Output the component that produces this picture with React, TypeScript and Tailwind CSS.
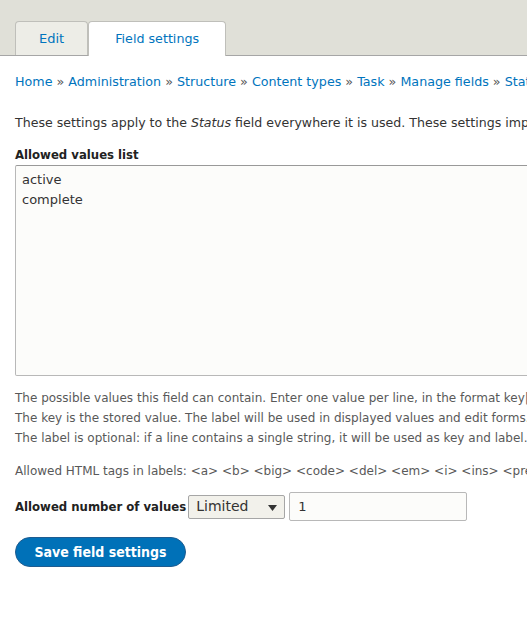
import * as React from 'react';

const font = { fontFamily: '"DejaVu Sans", "Liberation Sans", sans-serif' };
const boldFont = { fontFamily: '"DejaVu Sans Condensed", "DejaVu Sans", sans-serif' };

function Tabs() {
  return (
    <div className="bg-[#e0e0d8] border-b border-[#a6a6a6] px-[15px] pt-[21px] flex">
      <a className="block h-[34px] leading-[34px] px-[23px] bg-[#ededE7] border border-b-0 border-[#bfbfba] rounded-t-[4px] text-[13px] text-[#0074bd] -mb-px">
        Edit
      </a>
      <a className="block h-[35px] leading-[34px] px-[26px] bg-white border border-b-0 border-[#bfbfba] rounded-t-[4px] text-[12.7px] text-[#0074bd] -mb-px">
        Field settings
      </a>
    </div>
  );
}

const crumbs = ['Home', 'Administration', 'Structure', 'Content types', 'Task', 'Manage fields', 'Status'];

export default function App() {
  const [limit, setLimit] = React.useState('1');
  return (
    <div className="w-[527px] h-[626px] overflow-hidden bg-white text-[#333]" style={font}>
      <div className="w-[900px]">
        <Tabs />
        <div className="px-[15px]">
          <div className="mt-[16px] text-[12.7px] leading-[20px] whitespace-nowrap">
            {crumbs.map((c, i) => (
              <span key={c}>
                {i > 0 && <span className="text-[#555]"> » </span>}
                <a className="text-[#0074bd]">{c}</a>
              </span>
            ))}
          </div>
          <p className="mt-[21px] text-[12.6px] leading-[20px] whitespace-nowrap text-[#333]">
            These settings apply to the <em>Status</em> field everywhere it is used. These settings impact the way that data is stored in the database and cannot be changed once data has been created.
          </p>
          <div className="mt-[12px]">
            <label className="block text-[13px] font-bold leading-[20px] text-[#222]" style={boldFont}>Allowed values list</label>
            <textarea
              className="block w-[700px] h-[211px] bg-[#fcfcfa] border border-[#b8b8b8] border-t-[#999] rounded-[2px] px-[6px] py-[4px] text-[13px] leading-[20px] text-[#333] resize-none outline-none"
              defaultValue={'active\ncomplete'}
              style={font}
            />
            <div className="mt-[12px] text-[12px] leading-[20px] text-[#595959] whitespace-nowrap">
              <div>The possible values this field can contain. Enter one value per line, in the format key|label.</div>
              <div>The key is the stored value. The label will be used in displayed values and edit forms.</div>
              <div>The label is optional: if a line contains a single string, it will be used as key and label.</div>
              <div className="mt-[13px]">Allowed HTML tags in labels: &lt;a&gt; &lt;b&gt; &lt;big&gt; &lt;code&gt; &lt;del&gt; &lt;em&gt; &lt;i&gt; &lt;ins&gt; &lt;pre&gt; &lt;q&gt; &lt;small&gt; &lt;span&gt; &lt;strong&gt; &lt;sub&gt; &lt;sup&gt; &lt;tt&gt; &lt;ol&gt; &lt;ul&gt; &lt;li&gt; &lt;p&gt; &lt;br&gt; &lt;img&gt;</div>
            </div>
          </div>
          <div className="mt-[11px] flex items-center">
            <label className="text-[13px] font-bold text-[#222] mr-[2px]" style={boldFont}>Allowed number of values</label>
            <div className="relative w-[97px] h-[24px] mr-[4px] bg-[#f2f1eb] border border-[#a6a6a6] rounded-[2px] flex items-center pl-[7px] text-[14px] text-[#333]">
              Limited
              <svg className="absolute right-[7px] top-[9px]" width="9" height="6" viewBox="0 0 9 6">
                <path d="M0 0H9L4.5 6Z" fill="#333" />
              </svg>
            </div>
            <input
              value={limit}
              onChange={(e) => setLimit(e.target.value)}
              className="w-[178px] h-[29px] bg-[#fcfcfa] border border-[#b8b8b8] rounded-[2px] px-[8px] text-[13px] text-[#333] outline-none"
              style={font}
            />
          </div>
          <button
            className="mt-[16px] h-[30px] w-[171px] rounded-full bg-[#0071b8] border border-[#1e5c90] text-white text-[14px] font-bold"
            style={boldFont}
          >
            Save field settings
          </button>
        </div>
      </div>
    </div>
  );
}
